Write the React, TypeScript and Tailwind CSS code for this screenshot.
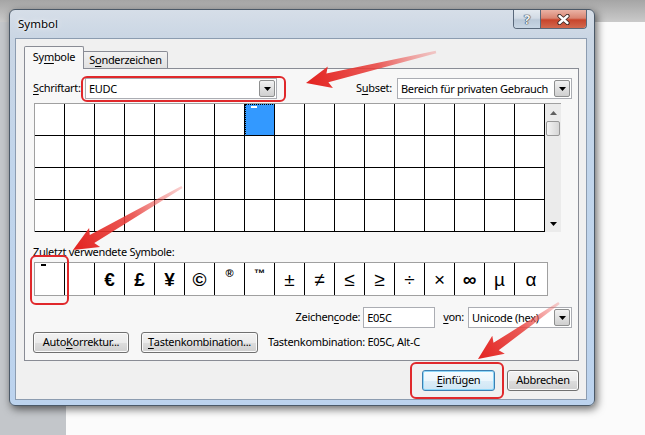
import React from "react";

const UI = "font-['Segoe_UI','Noto_Sans',sans-serif] text-[11px] tracking-[-0.3px] text-black";
const SYM = "font-['Liberation_Sans',Arial,sans-serif] tracking-normal";

type P = [number, number];

function arrowPoints(t: P, h: P, w0: number, w1: number, hw: number, hl: number) {
  const dx = h[0] - t[0];
  const dy = h[1] - t[1];
  const len = Math.hypot(dx, dy);
  const ux = dx / len;
  const uy = dy / len;
  const nx = -uy;
  const ny = ux;
  const bx = h[0] - ux * hl;
  const by = h[1] - uy * hl;
  const pts: P[] = [
    [t[0] + (nx * w0) / 2, t[1] + (ny * w0) / 2],
    [bx + (nx * w1) / 2, by + (ny * w1) / 2],
    [bx - ux * 3 + (nx * hw) / 2, by - uy * 3 + (ny * hw) / 2],
    h,
    [bx - ux * 3 - (nx * hw) / 2, by - uy * 3 - (ny * hw) / 2],
    [bx - (nx * w1) / 2, by - (ny * w1) / 2],
    [t[0] - (nx * w0) / 2, t[1] - (ny * w0) / 2],
  ];
  return pts.map((p) => p.map((v) => v.toFixed(1)).join(",")).join(" ");
}

const ARROWS: { t: P; h: P }[] = [
  { t: [436, 52], h: [306, 83] },
  { t: [182, 187], h: [73, 250] },
  { t: [559, 303], h: [478, 359] },
];

const RECENT = ["", "", "€", "£", "¥", "©", "®", "™", "±", "≠", "≤", "≥", "÷", "×", "∞", "µ", "α"];
const BOLD = new Set(["€", "£", "¥", "©", "®", "™", "∞"]);

function Mn({ children }: { children: React.ReactNode }) {
  return <span className="underline decoration-1 underline-offset-[2px]">{children}</span>;
}

function DropArrow() {
  return (
    <svg width="7" height="4" viewBox="0 0 7 4">
      <path d="M0 0h7L3.5 4z" fill="#000" />
    </svg>
  );
}

function Combo({ value, className }: { value: string; className: string }) {
  return (
    <div className={`flex h-[21px] items-stretch border border-[#abadb3] bg-white ${className}`}>
      <span className="flex-1 truncate pl-[3px] leading-[19px]">{value}</span>
      <span className="m-[1px] flex w-[16px] items-center justify-center rounded-[2px] border border-[#8e8f8f] bg-gradient-to-b from-[#f2f2f2] to-[#cfcfcf]">
        <DropArrow />
      </span>
    </div>
  );
}

function Button({
  children,
  className,
  isDefault = false,
}: {
  children: React.ReactNode;
  className: string;
  isDefault?: boolean;
}) {
  return (
    <div
      className={`flex h-[21px] items-center justify-center rounded-[3px] border ${
        isDefault
          ? "border-[#3c7fb1] bg-[linear-gradient(180deg,#f6fbfe_0%,#ecf6fc_50%,#dcedf8_51%,#cfe6f5_100%)] shadow-[inset_0_0_0_1px_#8ed6f8]"
          : "border-[#707070] bg-[linear-gradient(180deg,#f2f2f2_0%,#ebebeb_50%,#dddddd_51%,#cfcfcf_100%)] shadow-[inset_0_0_0_1px_#fbfbfb]"
      } ${className}`}
    >
      {children}
    </div>
  );
}

function Scrollbar() {
  return (
    <div className="flex h-[128px] w-[16px] flex-col items-center bg-[#ebebeb]">
      <div className="flex h-[17px] w-full items-center justify-center">
        <svg width="7" height="4" viewBox="0 0 7 4">
          <path d="M0 4h7L3.5 0z" fill="#606060" />
        </svg>
      </div>
      <div className="h-[15px] w-[14px] rounded-[2px] border border-[#979797] bg-gradient-to-r from-[#f4f4f4] to-[#d6d6d6]" />
      <div className="flex-1" />
      <div className="flex h-[17px] w-full items-center justify-center">
        <DropArrow />
      </div>
    </div>
  );
}

function SymbolGrid() {
  return (
    <div className="ml-[1px] mt-[4px] flex w-[527px] border-l border-t border-[#a0a0a0]">
      <div className="grid grid-cols-[repeat(17,30px)] grid-rows-[repeat(4,32px)]">
        {Array.from({ length: 68 }).map((_, i) =>
          i === 7 ? (
            <div
              key={i}
              className="border-b border-r border-black bg-[#3399ff] outline-1 -outline-offset-1 outline-dotted outline-black"
            >
              <div className="ml-[6px] mt-[2px] h-[2px] w-[6px] bg-white" />
            </div>
          ) : (
            <div key={i} className="border-b border-r border-black bg-white" />
          )
        )}
      </div>
      <Scrollbar />
    </div>
  );
}

function RecentRow() {
  return (
    <div className={`ml-[1px] mt-[3px] flex h-[34px] w-[514px] border border-[#a0a0a0] bg-white ${SYM}`}>
      {RECENT.map((s, i) => (
        <div
          key={i}
          className={`flex items-center justify-center text-[19px] leading-none ${
            i < 16 ? "w-[30px] border-r border-black" : "flex-1"
          } ${BOLD.has(s) ? "font-bold" : ""}`}
        >
          {i === 0 ? (
            <div className="-ml-[12px] -mt-[28px] h-[2px] w-[5px] bg-black" />
          ) : s === "®" || s === "™" ? (
            <span className="-translate-y-[6px] text-[11px]">{s}</span>
          ) : (
            s
          )}
        </div>
      ))}
    </div>
  );
}

function Window() {
  return (
    <div className="absolute left-[9px] top-[9px] flex h-[397px] w-[586px] flex-col rounded-[6px] border border-[#4b5968] bg-[linear-gradient(180deg,#d6dee8_0%,#cad6e4_7%,#c1d5eb_40%,#bcd3ee_100%)] pb-[5px] pl-[5px] pr-[7px] shadow-[2px_3px_9px_rgba(0,0,0,0.6)]">
      <div className="flex h-[28px] items-start justify-between">
        <span className="ml-[3px] mt-[6px] font-['Segoe_UI','Noto_Sans',sans-serif] text-[11.5px] leading-[15px] [text-shadow:0_0_6px_#ffffff,0_0_3px_#ffffff]">
          Symbol
        </span>
        <div className="flex h-[19px] overflow-hidden rounded-b-[4px] border border-t-0 border-[#59687a]">
          <div className="flex w-[27px] items-center justify-center border-r border-[#59687a] bg-[linear-gradient(180deg,#e4eaf0_0%,#d2dbe5_45%,#bac8d7_55%,#c8d6e4_100%)]">
            <span className="text-[13px] font-bold leading-none text-[#eef2f6] [text-shadow:0_0_1px_#2c3640,0_0_1px_#2c3640,0_0_1px_#2c3640]">
              ?
            </span>
          </div>
          <div className="flex w-[45px] items-center justify-center bg-[linear-gradient(180deg,#eab2a5_0%,#d98572_45%,#c8452c_55%,#d2694f_100%)]">
            <svg width="13" height="11" viewBox="0 0 13 11">
              <path d="M2.5 2l8 7M10.5 2l-8 7" stroke="#3b2a26" strokeWidth="4.2" strokeLinecap="round" />
              <path d="M2.5 2l8 7M10.5 2l-8 7" stroke="#ffffff" strokeWidth="2.4" strokeLinecap="round" />
            </svg>
          </div>
        </div>
      </div>

      <div className={`flex h-[362px] flex-col border border-[#8c9cb0] bg-[#f0f0f0] ${UI}`}>
        <div className="relative z-10 -mb-px ml-[8px] mt-[7px] flex h-[23px] items-end">
          <div className="flex h-[23px] w-[60px] items-center justify-center rounded-t-[2px] border border-b-0 border-[#898c95] bg-[#f7f7f7] pb-[2px]">
            Sy<Mn>m</Mn>bole
          </div>
          <div className="flex h-[18px] w-[84px] items-center justify-center rounded-tr-[2px] border border-l-0 border-[#898c95] bg-gradient-to-b from-[#f2f2f2] to-[#e1e1e1]">
            S<Mn>o</Mn>nderzeichen
          </div>
        </div>

        <div className="ml-[8px] flex h-[293px] w-[555px] flex-col border border-[#898c95] bg-[#f7f7f7] pl-[8px] pr-[6px] pt-[9px]">
          <div className="flex h-[21px] items-center">
            <span className="w-[52px]">
              <Mn>S</Mn>chriftart:
            </span>
            <Combo value="EUDC" className="w-[192px]" />
            <span className="ml-auto w-[41px]">
              S<Mn>u</Mn>bset:
            </span>
            <Combo value="Bereich für privaten Gebrauch" className="w-[175px]" />
          </div>

          <SymbolGrid />

          <div className="mt-[12px] h-[15px] leading-[15px]">Zuletzt verwendete Symbole:</div>
          <RecentRow />

          <div className="mt-[11px] flex h-[21px] items-center justify-end">
            <span>
              Zeichen<Mn>c</Mn>ode:
            </span>
            <div className="ml-[3px] h-[21px] w-[72px] border border-[#abadb3] bg-white pl-[3px] leading-[19px]">
              E05C
            </div>
            <span className="ml-[8px]">
              <Mn>v</Mn>on:
            </span>
            <Combo value="Unicode (hex)" className="ml-[4px] w-[104px]" />
          </div>

          <div className="mt-[4px] flex h-[21px] items-center">
            <Button className="w-[96px]">
              Auto<Mn>K</Mn>orrektur...
            </Button>
            <Button className="ml-[12px] w-[117px]">
              <Mn>T</Mn>astenkombination...
            </Button>
            <span className="ml-[10px]">Tastenkombination: E05C, Alt-C</span>
          </div>
        </div>

        <div className="mr-[7px] mt-[9px] flex justify-end">
          <Button className="w-[73px]" isDefault>
            <Mn>E</Mn>infügen
          </Button>
          <Button className="ml-[12px] w-[72px]">Abbrechen</Button>
        </div>
      </div>
    </div>
  );
}

function Annotations() {
  return (
    <svg className="pointer-events-none absolute left-0 top-0" width="645" height="435" viewBox="0 0 645 435">
      <defs>
        {ARROWS.map((a, i) => (
          <linearGradient
            key={i}
            id={`ag${i}`}
            gradientUnits="userSpaceOnUse"
            x1={a.t[0]}
            y1={a.t[1]}
            x2={a.h[0]}
            y2={a.h[1]}
          >
            <stop offset="0" stopColor="#f07a78" stopOpacity="0.35" />
            <stop offset="0.45" stopColor="#e8403c" stopOpacity="0.85" />
            <stop offset="1" stopColor="#e3221f" />
          </linearGradient>
        ))}
      </defs>
      <rect x="82" y="77" width="203" height="24" rx="5" fill="none" stroke="#e0282b" strokeWidth="2" />
      <rect x="31" y="256" width="37" height="48" rx="5" fill="none" stroke="#e0282b" strokeWidth="2" />
      <rect x="411" y="363" width="92" height="35" rx="5" fill="none" stroke="#e0282b" strokeWidth="2" />
      {ARROWS.map((a, i) => (
        <polygon key={i} points={arrowPoints(a.t, a.h, 2.5, 9, 22, 22)} fill={`url(#ag${i})`} />
      ))}
    </svg>
  );
}

export default function App() {
  return (
    <div className="relative h-[435px] w-[645px] overflow-hidden bg-[#c3c6ca]">
      <div className="absolute inset-x-0 top-0 h-[22px] bg-gradient-to-b from-[#a5a5a5] to-[#cacaca]" />
      <div className="absolute bottom-0 left-[66px] right-0 top-[22px] bg-[#fbfbfb]" />
      <Window />
      <Annotations />
    </div>
  );
}
